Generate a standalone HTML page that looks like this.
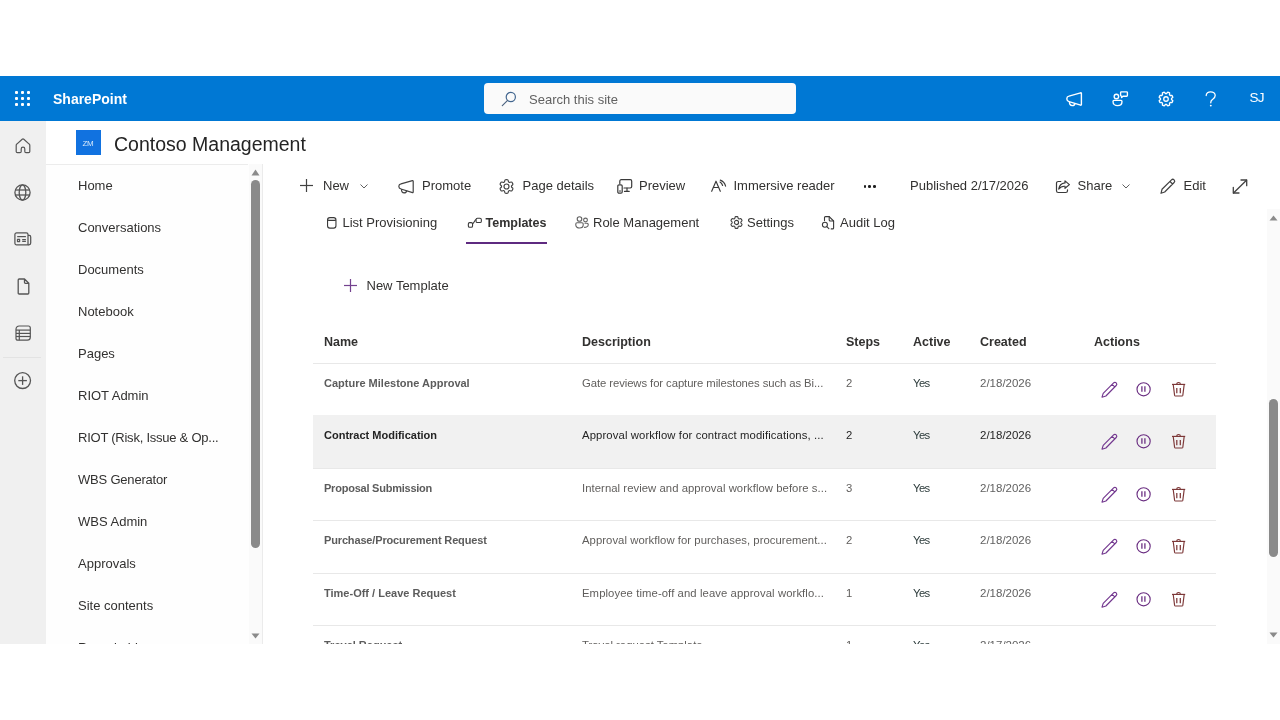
<!DOCTYPE html>
<html><head><meta charset="utf-8">
<style>
*{box-sizing:border-box;margin:0;padding:0}
html,body{width:1280px;height:720px;background:#fff;overflow:hidden;font-family:"Liberation Sans",sans-serif;color:#323130}
.abs{position:absolute}
.t{position:absolute;white-space:nowrap;line-height:1}
#frame{will-change:transform;position:absolute;left:0;top:76px;width:1280px;height:568px;overflow:hidden;background:#fff}
#suite{position:absolute;left:0;top:0;width:1280px;height:45px;background:#0078d4}
#rail{position:absolute;left:0;top:45px;width:46px;height:523px;background:#f0f0f0}
#nav{position:absolute;left:46px;top:88px;width:216px;height:480px;background:#fefefe;overflow:hidden}
#vborder{position:absolute;left:262px;top:88px;width:1px;height:480px;background:#ebebeb}
.nav-item{position:absolute;left:32px;font-size:13px;color:#323130;white-space:nowrap;line-height:1}
svg{position:absolute;overflow:visible}
.cmd{position:absolute;white-space:nowrap;line-height:1;font-size:13px;color:#323130}
.th{position:absolute;white-space:nowrap;line-height:1;font-size:12.5px;font-weight:700;color:#323130}
.c{position:absolute;white-space:nowrap;line-height:1;font-size:11.3px;color:#605e5c}
.cn{font-weight:700;color:#505050;font-size:11px}
.yes{color:#2b3a3a;letter-spacing:-0.6px}
.hline{position:absolute;left:313px;width:903px;height:1px;background:#e8e8e8}
</style></head>
<body>
<div id="frame">
  <div id="suite">
    <svg style="left:15px;top:15px" width="16" height="15" viewBox="0 0 16 15">
      <g fill="#fff">
        <rect x="0" y="0" width="3" height="3" rx="1"/><rect x="6" y="0" width="3" height="3" rx="1"/><rect x="12" y="0" width="3" height="3" rx="1"/>
        <rect x="0" y="6" width="3" height="3" rx="1"/><rect x="6" y="6" width="3" height="3" rx="1"/><rect x="12" y="6" width="3" height="3" rx="1"/>
        <rect x="0" y="12" width="3" height="3" rx="1"/><rect x="6" y="12" width="3" height="3" rx="1"/><rect x="12" y="12" width="3" height="3" rx="1"/>
      </g>
    </svg>
    <div class="t" style="left:53px;top:16px;font-size:14px;font-weight:700;color:#fff">SharePoint</div>
    <div class="abs" style="left:484px;top:7px;width:312px;height:31px;background:#fafafa;border-radius:4px"></div>
    <svg style="left:501px;top:15px" width="16" height="16" viewBox="0 0 16 16">
      <circle cx="9.8" cy="6" r="4.6" fill="none" stroke="#42668f" stroke-width="1.2"/>
      <line x1="6.6" y1="9.3" x2="1.3" y2="14.6" stroke="#4d6480" stroke-width="1.2" stroke-linecap="round"/>
    </svg>
    <div class="t" style="left:529px;top:17px;font-size:13px;color:#616161">Search this site</div>
    <!-- megaphone -->
    <svg style="left:1066px;top:15.5px" width="17" height="15" viewBox="0 0 17 15">
      <g fill="none" stroke="#fff" stroke-width="1.4" stroke-linejoin="round">
        <path d="M15.4 1.4 V12.6 C15.4 13 15.1 13.3 14.7 13.2 L3 9.6 C1.6 9.2 0.9 8.5 0.9 7.3 V6.3 C0.9 5.1 1.6 4.4 3 4.1 L14.6 0.8 C15 0.7 15.4 1 15.4 1.4 Z"/>
        <path d="M3.6 9.8 C3.2 12 4.4 13.6 6.2 13.6 C7.7 13.6 8.8 12.6 9 11.3"/>
      </g>
    </svg>
    <!-- chat person -->
    <svg style="left:1112px;top:15px" width="17" height="16" viewBox="0 0 17 16">
      <g fill="none" stroke="#fff" stroke-width="1.35" stroke-linejoin="round">
        <circle cx="4.4" cy="5.45" r="2.25"/>
        <path d="M1 10.4 C1 9.8 1.4 9.4 2 9.4 H9 C9.6 9.4 10 9.8 10 10.4 C10 13.3 8 14.6 5.5 14.6 C3 14.6 1 13.3 1 10.4 Z"/>
        <path d="M9.3 0.8 H14.6 C15 0.8 15.4 1.2 15.4 1.6 V4.4 C15.4 4.8 15 5.2 14.6 5.2 H11 L9.6 6.6 V5.2 C9.1 5.1 8.6 4.8 8.6 4.3 V1.6 C8.6 1.2 8.9 0.8 9.3 0.8 Z"/>
      </g>
    </svg>
    <!-- gear -->
    <svg style="left:1157.5px;top:15px" width="16" height="16" viewBox="0 0 24 24">
      <g fill="none" stroke="#fff" stroke-width="1.95" stroke-linejoin="round">
        <path d="M12.85 3.74 L14.64 1.73 L17.40 2.88 L17.24 5.56 L18.44 6.76 L21.12 6.60 L22.27 9.36 L20.26 11.15 L20.26 12.85 L22.27 14.64 L21.12 17.40 L18.44 17.24 L17.24 18.44 L17.40 21.12 L14.64 22.27 L12.85 20.26 L11.15 20.26 L9.36 22.27 L6.60 21.12 L6.76 18.44 L5.56 17.24 L2.88 17.40 L1.73 14.64 L3.74 12.85 L3.74 11.15 L1.73 9.36 L2.88 6.60 L5.56 6.76 L6.76 5.56 L6.60 2.88 L9.36 1.73 L11.15 3.74 Z"/>
        <circle cx="12" cy="12" r="3.4"/>
      </g>
    </svg>
    <svg style="left:1205px;top:15px" width="12" height="16" viewBox="0 0 12 16"><g fill="none" stroke="#fff" stroke-width="1.3" stroke-linecap="round"><path d="M1.2 4.6 C1.2 2.2 3.2 0.8 5.6 0.8 C8.2 0.8 10.2 2.4 10.2 4.6 C10.2 6.4 9.2 7.3 7.8 8.2 C6.5 9 5.8 9.8 5.8 11.2 V11.8"/></g><circle cx="5.8" cy="14.6" r="0.95" fill="#fff"/></svg>
    <div class="t" style="left:1249.5px;top:14.5px;font-size:13.5px;color:#fff;letter-spacing:-0.8px">SJ</div>
  </div>
  <div id="rail">
    <!-- home -->
    <svg style="left:15px;top:17px" width="16" height="16" viewBox="0 0 16 16">
      <path d="M7.2 1.3 C7.7 0.9 8.3 0.9 8.8 1.3 L14.2 6.1 C14.6 6.4 14.8 6.9 14.8 7.4 V13.4 C14.8 14.1 14.3 14.6 13.6 14.6 H11 C10.3 14.6 9.8 14.1 9.8 13.4 V10.9 C9.8 9.9 9 9.1 8 9.1 C7 9.1 6.2 9.9 6.2 10.9 V13.4 C6.2 14.1 5.7 14.6 5 14.6 H2.4 C1.7 14.6 1.2 14.1 1.2 13.4 V7.4 C1.2 6.9 1.4 6.4 1.8 6.1 Z" fill="none" stroke="#555555" stroke-width="1.2" stroke-linejoin="round"/>
    </svg>
    <!-- globe -->
    <svg style="left:13.7px;top:62.7px" width="17" height="17" viewBox="0 0 17 17">
      <g fill="none" stroke="#555555" stroke-width="1.3">
        <circle cx="8.5" cy="8.5" r="7.6"/>
        <ellipse cx="8.5" cy="8.5" rx="3.3" ry="7.6"/>
        <line x1="1" y1="6" x2="16" y2="6"/><line x1="1" y1="11" x2="16" y2="11"/>
      </g>
    </svg>
    <!-- news -->
    <svg style="left:14px;top:111px" width="18" height="14" viewBox="0 0 18 14">
      <g fill="none" stroke="#555555" stroke-width="1.25" stroke-linejoin="round">
        <path d="M14 12.8 H2.6 C1.6 12.8 0.9 12.1 0.9 11.1 V2.6 C0.9 1.6 1.6 0.9 2.6 0.9 H12.3 C13.3 0.9 14 1.6 14 2.6 Z"/>
        <path d="M14 3.4 H15.3 C16.2 3.4 16.7 4 16.7 4.9 V11.1 C16.7 12.1 16 12.8 15 12.8 H14"/>
        <line x1="3.2" y1="4.6" x2="11.9" y2="4.6"/>
        <rect x="3.5" y="7.4" width="2.1" height="2.1"/>
        <line x1="8.2" y1="7.6" x2="11.9" y2="7.6"/><line x1="8.2" y1="9.4" x2="11.9" y2="9.4"/>
      </g>
    </svg>
    <!-- doc -->
    <svg style="left:17px;top:157px" width="13" height="17" viewBox="0 0 13 17">
      <path d="M1.2 2 C1.2 1.4 1.6 1 2.2 1 H7.5 L11.8 5.3 V15 C11.8 15.6 11.4 16 10.8 16 H2.2 C1.6 16 1.2 15.6 1.2 15 Z M7.5 1 V4.5 C7.5 5 7.9 5.3 8.4 5.3 H11.8" fill="none" stroke="#555555" stroke-width="1.3" stroke-linejoin="round"/>
    </svg>
    <!-- list -->
    <svg style="left:15px;top:204px" width="17" height="17" viewBox="0 0 17 17">
      <g fill="none" stroke="#555555" stroke-width="1.2" stroke-linejoin="round">
        <path d="M4.2 1 H13.4 C14.5 1 15.3 1.8 15.3 2.9 V12.2 C15.3 13.9 14 15.2 12.3 15.2 H2.7 C1.7 15.2 1 14.5 1 13.5 V4.2 C1 2.4 2.4 1 4.2 1 Z"/>
        <line x1="1" y1="5.1" x2="15.3" y2="5.1"/><line x1="1" y1="8.4" x2="15.3" y2="8.4"/><line x1="1" y1="11.5" x2="15.3" y2="11.5"/>
        <line x1="4.3" y1="5.1" x2="4.3" y2="15.2"/>
      </g>
    </svg>
    <div class="abs" style="left:3px;top:236px;width:38px;height:1px;background:#e3e3e3"></div>
    <!-- plus circle -->
    <svg style="left:14px;top:251px" width="18" height="18" viewBox="0 0 18 18">
      <g fill="none" stroke="#555555" stroke-width="1.3">
        <circle cx="8.6" cy="8.6" r="7.9"/>
        <line x1="8.6" y1="4.3" x2="8.6" y2="12.9"/><line x1="4.3" y1="8.6" x2="12.9" y2="8.6"/>
      </g>
    </svg>
  </div>
  <!-- site header -->
  <div class="abs" style="left:76px;top:54px;width:25px;height:25px;background:#1172e0"></div>
  <div class="t" style="left:82.5px;top:63.5px;font-size:8px;color:#d6e8fb;letter-spacing:-0.3px">ZM</div>
  <div class="t" style="left:114px;top:58.5px;font-size:19.5px;color:#242424">Contoso Management</div>
  <div id="nav">
    <div class="abs" style="left:0;top:0;width:202px;height:1px;background:#ececec"></div>
    <div class="nav-item" style="top:15px">Home</div>
    <div class="nav-item" style="top:57px">Conversations</div>
    <div class="nav-item" style="top:99px">Documents</div>
    <div class="nav-item" style="top:141px">Notebook</div>
    <div class="nav-item" style="top:183px">Pages</div>
    <div class="nav-item" style="top:225px">RIOT Admin</div>
    <div class="nav-item" style="top:267px;letter-spacing:-0.24px">RIOT (Risk, Issue &amp; Op...</div>
    <div class="nav-item" style="top:309px;letter-spacing:-0.2px">WBS Generator</div>
    <div class="nav-item" style="top:351px">WBS Admin</div>
    <div class="nav-item" style="top:393px">Approvals</div>
    <div class="nav-item" style="top:435px">Site contents</div>
    <div class="nav-item" style="top:477px">Recycle bin</div>
    <!-- scrollbar -->
    <div class="abs" style="left:203px;top:0;width:13px;height:480px;background:#fafafa"></div>
    <svg style="left:205px;top:5px" width="9" height="7" viewBox="0 0 9 7"><path d="M4.5 0.5 L8.5 6.5 H0.5 Z" fill="#8a8a8a"/></svg>
    <div class="abs" style="left:205px;top:16px;width:8.5px;height:368px;background:#8a8a8a;border-radius:4.5px"></div>
    <svg style="left:205px;top:469px" width="9" height="6" viewBox="0 0 9 6"><path d="M0.5 0.5 H8.5 L4.5 5.5 Z" fill="#8a8a8a"/></svg>
  </div>
  <div id="vborder"></div>
  <!-- command bar (frame coords: y = abs - 76) -->
  <svg style="left:300px;top:103px" width="13" height="13" viewBox="0 0 13 13"><g stroke="#424242" stroke-width="1.2"><line x1="6.5" y1="0" x2="6.5" y2="13"/><line x1="0" y1="6.5" x2="13" y2="6.5"/></g></svg>
  <div class="cmd" style="left:323px;top:103px">New</div>
  <svg style="left:360px;top:108px" width="8" height="5" viewBox="0 0 8 5"><path d="M0.5 0.5 L4 4 L7.5 0.5" fill="none" stroke="#616161" stroke-width="1"/></svg>
  <!-- promote -->
  <svg style="left:398px;top:179.5px;top:103.5px" width="17" height="14" viewBox="0 0 17 14">
    <g fill="none" stroke="#424242" stroke-width="1.2" stroke-linejoin="round">
      <path d="M15.2 1.2 V12 C15.2 12.4 14.9 12.7 14.5 12.6 L3 9 C1.6 8.6 0.9 8 0.9 6.8 V5.9 C0.9 4.7 1.6 4.1 3 3.8 L14.4 0.6 C14.8 0.5 15.2 0.8 15.2 1.2 Z"/>
      <path d="M3.6 9.2 C3.2 11.4 4.4 12.9 6.1 12.9 C7.6 12.9 8.6 11.9 8.8 10.6"/>
    </g>
  </svg>
  <div class="cmd" style="left:422px;top:103px">Promote</div>
  <!-- gear -->
  <svg style="left:499.1px;top:102.8px" width="15" height="15" viewBox="0 0 24 24">
    <g fill="none" stroke="#424242" stroke-width="1.9" stroke-linejoin="round">
      <path d="M10.29 1.23 A10.90 10.90 0 0 1 13.71 1.23 C15.15 1.57 14.73 4.48 15.33 4.73 A8.00 8.00 0 0 1 16.63 5.48 C17.15 5.88 19.46 4.05 20.47 5.14 L20.47 5.14 A10.90 10.90 0 0 1 22.18 8.09 C22.61 9.51 19.88 10.60 19.96 11.25 A8.00 8.00 0 0 1 19.96 12.75 C19.88 13.40 22.61 14.49 22.18 15.91 L22.18 15.91 A10.90 10.90 0 0 1 20.47 18.86 C19.46 19.95 17.15 18.12 16.63 18.52 A8.00 8.00 0 0 1 15.33 19.27 C14.73 19.52 15.15 22.43 13.71 22.77 L13.71 22.77 A10.90 10.90 0 0 1 10.29 22.77 C8.85 22.43 9.27 19.52 8.67 19.27 A8.00 8.00 0 0 1 7.37 18.52 C6.85 18.12 4.54 19.95 3.53 18.86 L3.53 18.86 A10.90 10.90 0 0 1 1.82 15.91 C1.39 14.49 4.12 13.40 4.04 12.75 A8.00 8.00 0 0 1 4.04 11.25 C4.12 10.60 1.39 9.51 1.82 8.09 L1.82 8.09 A10.90 10.90 0 0 1 3.53 5.14 C4.54 4.05 6.85 5.88 7.37 5.48 A8.00 8.00 0 0 1 8.67 4.73 C9.27 4.48 8.85 1.57 10.29 1.23 Z"/>
      <circle cx="12" cy="12" r="4.0"/>
    </g>
  </svg>
  <div class="cmd" style="left:522.5px;top:103px">Page details</div>
  <!-- preview -->
  <svg style="left:617px;top:103px" width="16" height="15" viewBox="0 0 16 15">
    <g fill="none" stroke="#3a3a3a" stroke-width="1.2" stroke-linejoin="round" stroke-linecap="round">
      <path d="M2.8 4.6 V2.2 C2.8 1.4 3.4 0.7 4.2 0.7 H13.3 C14.1 0.7 14.7 1.4 14.7 2.2 V7.6 C14.7 8.4 14.1 9 13.3 9 H7"/>
      <path d="M10 9 V12.4"/><path d="M7.5 12.4 H12.2"/>
      <rect x="0.8" y="5.8" width="4.4" height="8.3" rx="1.2"/>
      <path d="M2.4 12 H3.6"/>
    </g>
  </svg>
  <div class="cmd" style="left:639px;top:103px">Preview</div>
  <!-- immersive reader -->
  <svg style="left:711px;top:104px" width="15" height="12" viewBox="0 0 15 12">
    <g fill="none" stroke="#3a3a3a" stroke-width="1.15" stroke-linejoin="round" stroke-linecap="round">
      <path d="M0.7 11.3 L5 1.2 L9.3 11.3 M2.3 7.5 H7.7"/>
      <path d="M9 2.1 C10.3 2.8 11.1 3.9 11.6 5.5"/>
      <path d="M9.3 0.1 C12 1.1 13.9 3.3 14.6 6.1"/>
    </g>
  </svg>
  <div class="cmd" style="left:733.5px;top:103px">Immersive reader</div>
  
  <div class="abs" style="left:863.6px;top:109px;width:2.6px;height:2.6px;border-radius:50%;background:#1e1e1e"></div>
  <div class="abs" style="left:868.4px;top:109px;width:2.6px;height:2.6px;border-radius:50%;background:#1e1e1e"></div>
  <div class="abs" style="left:873.1px;top:109px;width:2.6px;height:2.6px;border-radius:50%;background:#1e1e1e"></div>
  <div class="cmd" style="left:910px;top:103px">Published 2/17/2026</div>
  <!-- share -->
  <svg style="left:1055px;top:104px" width="15" height="14" viewBox="0 0 15 14">
    <g fill="none" stroke="#3a3a3a" stroke-width="1.2" stroke-linejoin="round" stroke-linecap="round">
      <path d="M5.8 1.5 H3.3 C2.3 1.5 1.5 2.3 1.5 3.3 V10.7 C1.5 11.7 2.3 12.5 3.3 12.5 H10.7 C11.7 12.5 12.5 11.7 12.5 10.7 V9.8"/>
      <path d="M10 0.9 L14.4 4.6 L10 8.3 V6.3 C7.5 6.1 5.3 7 3.7 9.1 C4.2 5.7 6.5 3.3 10 2.9 Z"/>
    </g>
  </svg>
  <div class="cmd" style="left:1077.5px;top:103px">Share</div>
  <svg style="left:1122px;top:108px" width="8" height="5" viewBox="0 0 8 5"><path d="M0.5 0.5 L4 4 L7.5 0.5" fill="none" stroke="#616161" stroke-width="1"/></svg>
  <!-- edit -->
  <svg style="left:1160px;top:103px" width="16" height="15" viewBox="0 0 16 15">
    <path d="M1 14.3 L2 10.3 L11.5 0.9 C12.2 0.2 13.4 0.2 14.1 0.9 C14.8 1.6 14.8 2.8 14.1 3.5 L4.7 13 Z M10 2.5 L12.6 5" fill="none" stroke="#424242" stroke-width="1.2" stroke-linejoin="round"/>
  </svg>
  <div class="cmd" style="left:1183.5px;top:103px">Edit</div>
  <!-- expand -->
  <svg style="left:1232px;top:103px" width="16" height="15" viewBox="0 0 16 15">
    <g fill="none" stroke="#424242" stroke-width="1.3" stroke-linecap="round" stroke-linejoin="round">
      <path d="M9 1 H14.7 V6.7"/><path d="M14.5 1.2 L1.5 14"/><path d="M1.3 8.3 V14 H7"/>
    </g>
  </svg>

  <!-- tabs -->
  <svg style="left:327px;top:141px" width="10" height="12" viewBox="0 0 10 12">
    <g fill="none" stroke="#3a3a3a" stroke-width="1.1">
      <rect x="0.55" y="0.6" width="8.4" height="10.5" rx="2.3"/>
      <path d="M0.55 3.1 C2 3.5 7.5 3.5 8.95 3.1"/>
    </g>
  </svg>
  <div class="cmd" style="left:342.5px;top:140px">List Provisioning</div>
  <svg style="left:467px;top:141px" width="16" height="12" viewBox="0 0 16 12">
    <g fill="none" stroke="#3a3a3a" stroke-width="1.1" stroke-linejoin="round">
      <rect x="1.35" y="5.65" width="4.2" height="4.6" rx="1.3"/>
      <rect x="9.05" y="1.25" width="5.3" height="4.3" rx="1.4"/>
      <path d="M5.5 7 C7 6.2 7.6 3.2 9.05 2.6"/>
    </g>
  </svg>
  <div class="cmd" style="left:485.5px;top:141px;font-weight:700;font-size:12.5px;color:#323130">Templates</div>
  <div class="abs" style="left:466px;top:166px;width:81px;height:2px;background:#5e2a80"></div>
  <svg style="left:575px;top:140px" width="14" height="13" viewBox="0 0 14 13">
    <g fill="none" stroke="#616161" stroke-width="1.1">
      <circle cx="4.5" cy="3" r="2.3"/>
      <circle cx="10.5" cy="4" r="1.9"/>
      <path d="M0.8 8 C0.8 7.2 1.3 6.8 2 6.8 H7 C7.7 6.8 8.2 7.2 8.2 8 V9 C8.2 11 6.5 12 4.5 12 C2.5 12 0.8 11 0.8 9 Z"/>
      <path d="M9 11.2 C10 11.5 13.2 11.3 13.2 9 V8.2 C13.2 7.5 12.8 7.2 12 7.2 H9.5"/>
    </g>
  </svg>
  <div class="cmd" style="left:593px;top:140px">Role Management</div>
  <svg style="left:729.6px;top:140px" width="13" height="13" viewBox="0 0 24 24">
    <g fill="none" stroke="#424242" stroke-width="2.1" stroke-linejoin="round">
      <path d="M10.29 1.23 A10.90 10.90 0 0 1 13.71 1.23 C15.15 1.57 14.73 4.48 15.33 4.73 A8.00 8.00 0 0 1 16.63 5.48 C17.15 5.88 19.46 4.05 20.47 5.14 L20.47 5.14 A10.90 10.90 0 0 1 22.18 8.09 C22.61 9.51 19.88 10.60 19.96 11.25 A8.00 8.00 0 0 1 19.96 12.75 C19.88 13.40 22.61 14.49 22.18 15.91 L22.18 15.91 A10.90 10.90 0 0 1 20.47 18.86 C19.46 19.95 17.15 18.12 16.63 18.52 A8.00 8.00 0 0 1 15.33 19.27 C14.73 19.52 15.15 22.43 13.71 22.77 L13.71 22.77 A10.90 10.90 0 0 1 10.29 22.77 C8.85 22.43 9.27 19.52 8.67 19.27 A8.00 8.00 0 0 1 7.37 18.52 C6.85 18.12 4.54 19.95 3.53 18.86 L3.53 18.86 A10.90 10.90 0 0 1 1.82 15.91 C1.39 14.49 4.12 13.40 4.04 12.75 A8.00 8.00 0 0 1 4.04 11.25 C4.12 10.60 1.39 9.51 1.82 8.09 L1.82 8.09 A10.90 10.90 0 0 1 3.53 5.14 C4.54 4.05 6.85 5.88 7.37 5.48 A8.00 8.00 0 0 1 8.67 4.73 C9.27 4.48 8.85 1.57 10.29 1.23 Z"/>
      <circle cx="12" cy="12" r="3.8"/>
    </g>
  </svg>
  <div class="cmd" style="left:747px;top:140px">Settings</div>
  <svg style="left:822px;top:140px" width="13" height="14" viewBox="0 0 13 14">
    <g fill="none" stroke="#3a3a3a" stroke-width="1.1" stroke-linejoin="round" stroke-linecap="round">
      <path d="M2.5 4.6 V1.6 C2.5 1 2.9 0.6 3.5 0.6 H7.2 L11.6 5 V11.9 C11.6 12.5 11.2 12.9 10.6 12.9 H9.2"/>
      <path d="M7.2 0.6 V4 C7.2 4.6 7.6 5 8.2 5 H11.6"/>
      <circle cx="2.9" cy="8.7" r="2.5"/>
      <path d="M4.8 10.6 L6.9 12.7"/>
    </g>
  </svg>
  <div class="cmd" style="left:840px;top:140px">Audit Log</div>

  <!-- right scrollbar -->
  <div class="abs" style="left:1267px;top:133px;width:13px;height:435px;background:#fafafa"></div>
  <svg style="left:1269px;top:139px" width="9" height="6" viewBox="0 0 9 6"><path d="M4.5 0.5 L8.5 5.5 H0.5 Z" fill="#8a8a8a"/></svg>
  <div class="abs" style="left:1268.5px;top:323px;width:9px;height:158px;background:#8a8a8a;border-radius:4.5px"></div>
  <svg style="left:1269px;top:556px" width="9" height="6" viewBox="0 0 9 6"><path d="M0.5 0.5 H8.5 L4.5 5.5 Z" fill="#8a8a8a"/></svg>

  <!-- new template -->
  <svg style="left:344px;top:203px" width="13" height="13" viewBox="0 0 13 13"><g stroke="#74428f" stroke-width="1.2"><line x1="6.5" y1="0" x2="6.5" y2="13"/><line x1="0" y1="6.5" x2="13" y2="6.5"/></g></svg>
  <div class="cmd" style="left:366.5px;top:203px">New Template</div>

  <!-- table header -->
  <div class="th" style="left:324px;top:260px">Name</div>
  <div class="th" style="left:582px;top:260px">Description</div>
  <div class="th" style="left:846px;top:260px">Steps</div>
  <div class="th" style="left:913px;top:260px">Active</div>
  <div class="th" style="left:980px;top:260px">Created</div>
  <div class="th" style="left:1094px;top:260px">Actions</div>
  <div class="hline" style="top:287px"></div>
  <div class="abs" style="left:313px;top:339px;width:903px;height:53px;background:#f1f1f1"></div>
  <div class="hline" style="top:392px"></div>
  <div class="hline" style="top:444px"></div>
  <div class="hline" style="top:497px"></div>
  <div class="hline" style="top:549px"></div>
  <div class="c cn" style="left:324px;top:302px;color:#5c5c5c">Capture Milestone Approval</div>
  <div class="c" style="left:582px;top:302px;letter-spacing:-0.075px">Gate reviews for capture milestones such as Bi...</div>
  <div class="c" style="left:846px;top:302px">2</div>
  <div class="c yes" style="left:913px;top:302px">Yes</div>
  <div class="c" style="left:980px;top:302px;font-size:11.5px;color:#616161">2/18/2026</div>
  <div class="c cn" style="left:324px;top:354px;color:#242424">Contract Modification</div>
  <div class="c" style="left:582px;top:354px;color:#242424;letter-spacing:0.115px">Approval workflow for contract modifications, ...</div>
  <div class="c" style="left:846px;top:354px;color:#242424">2</div>
  <div class="c yes" style="left:913px;top:354px">Yes</div>
  <div class="c" style="left:980px;top:354px;font-size:11.5px;color:#242424">2/18/2026</div>
  <div class="c cn" style="left:324px;top:407px;color:#5c5c5c;letter-spacing:-0.23px">Proposal Submission</div>
  <div class="c" style="left:582px;top:407px;letter-spacing:0.055px">Internal review and approval workflow before s...</div>
  <div class="c" style="left:846px;top:407px">3</div>
  <div class="c yes" style="left:913px;top:407px">Yes</div>
  <div class="c" style="left:980px;top:407px;font-size:11.5px;color:#616161">2/18/2026</div>
  <div class="c cn" style="left:324px;top:459px;color:#5c5c5c;letter-spacing:-0.15px">Purchase/Procurement Request</div>
  <div class="c" style="left:582px;top:459px;letter-spacing:0.055px">Approval workflow for purchases, procurement...</div>
  <div class="c" style="left:846px;top:459px">2</div>
  <div class="c yes" style="left:913px;top:459px">Yes</div>
  <div class="c" style="left:980px;top:459px;font-size:11.5px;color:#616161">2/18/2026</div>
  <div class="c cn" style="left:324px;top:512px;color:#5c5c5c">Time-Off / Leave Request</div>
  <div class="c" style="left:582px;top:512px;letter-spacing:0.09px">Employee time-off and leave approval workflo...</div>
  <div class="c" style="left:846px;top:512px">1</div>
  <div class="c yes" style="left:913px;top:512px">Yes</div>
  <div class="c" style="left:980px;top:512px;font-size:11.5px;color:#616161">2/18/2026</div>
  <svg style="left:1101px;top:305.5px" width="17" height="16" viewBox="0 0 17 16"><path d="M1 15.2 L2.2 11.3 L12.6 0.9 C13.3 0.2 14.5 0.2 15.2 0.9 C15.9 1.6 15.9 2.8 15.2 3.5 L4.9 14 Z M11.2 2.4 L13.7 4.9" fill="none" stroke="#73388f" stroke-width="1.15" stroke-linejoin="round"/></svg>
  <svg style="left:1135.5px;top:306px" width="16" height="16" viewBox="0 0 16 16"><g fill="none" stroke="#6b2f82" stroke-width="1.15"><circle cx="7.6" cy="7.3" r="6.6"/><line x1="5.9" y1="4.3" x2="5.9" y2="9.8" stroke-width="1.3"/><line x1="8.9" y1="4.3" x2="8.9" y2="9.8" stroke-width="1.3"/></g></svg>
  <svg style="left:1170.5px;top:306px" width="16" height="16" viewBox="0 0 16 16"><g fill="none" stroke="#7d3838" stroke-width="1.15" stroke-linejoin="round"><path d="M1 2.4 H14.2"/><path d="M5.8 2.4 C5.8 1 6.4 0.5 7.6 0.5 C8.8 0.5 9.4 1 9.4 2.4"/><path d="M2.2 2.4 L3.6 13.4 C3.7 13.8 4 14 4.4 14 H11 C11.4 14 11.7 13.8 11.8 13.4 L13.2 2.4"/><line x1="5.8" y1="6" x2="5.8" y2="11.2" stroke-width="1.25"/><line x1="9.3" y1="6" x2="9.3" y2="11.2" stroke-width="1.25"/></g></svg>
  <svg style="left:1101px;top:357.5px" width="17" height="16" viewBox="0 0 17 16"><path d="M1 15.2 L2.2 11.3 L12.6 0.9 C13.3 0.2 14.5 0.2 15.2 0.9 C15.9 1.6 15.9 2.8 15.2 3.5 L4.9 14 Z M11.2 2.4 L13.7 4.9" fill="none" stroke="#73388f" stroke-width="1.15" stroke-linejoin="round"/></svg>
  <svg style="left:1135.5px;top:358px" width="16" height="16" viewBox="0 0 16 16"><g fill="none" stroke="#6b2f82" stroke-width="1.15"><circle cx="7.6" cy="7.3" r="6.6"/><line x1="5.9" y1="4.3" x2="5.9" y2="9.8" stroke-width="1.3"/><line x1="8.9" y1="4.3" x2="8.9" y2="9.8" stroke-width="1.3"/></g></svg>
  <svg style="left:1170.5px;top:358px" width="16" height="16" viewBox="0 0 16 16"><g fill="none" stroke="#7d3838" stroke-width="1.15" stroke-linejoin="round"><path d="M1 2.4 H14.2"/><path d="M5.8 2.4 C5.8 1 6.4 0.5 7.6 0.5 C8.8 0.5 9.4 1 9.4 2.4"/><path d="M2.2 2.4 L3.6 13.4 C3.7 13.8 4 14 4.4 14 H11 C11.4 14 11.7 13.8 11.8 13.4 L13.2 2.4"/><line x1="5.8" y1="6" x2="5.8" y2="11.2" stroke-width="1.25"/><line x1="9.3" y1="6" x2="9.3" y2="11.2" stroke-width="1.25"/></g></svg>
  <svg style="left:1101px;top:410.5px" width="17" height="16" viewBox="0 0 17 16"><path d="M1 15.2 L2.2 11.3 L12.6 0.9 C13.3 0.2 14.5 0.2 15.2 0.9 C15.9 1.6 15.9 2.8 15.2 3.5 L4.9 14 Z M11.2 2.4 L13.7 4.9" fill="none" stroke="#73388f" stroke-width="1.15" stroke-linejoin="round"/></svg>
  <svg style="left:1135.5px;top:411px" width="16" height="16" viewBox="0 0 16 16"><g fill="none" stroke="#6b2f82" stroke-width="1.15"><circle cx="7.6" cy="7.3" r="6.6"/><line x1="5.9" y1="4.3" x2="5.9" y2="9.8" stroke-width="1.3"/><line x1="8.9" y1="4.3" x2="8.9" y2="9.8" stroke-width="1.3"/></g></svg>
  <svg style="left:1170.5px;top:411px" width="16" height="16" viewBox="0 0 16 16"><g fill="none" stroke="#7d3838" stroke-width="1.15" stroke-linejoin="round"><path d="M1 2.4 H14.2"/><path d="M5.8 2.4 C5.8 1 6.4 0.5 7.6 0.5 C8.8 0.5 9.4 1 9.4 2.4"/><path d="M2.2 2.4 L3.6 13.4 C3.7 13.8 4 14 4.4 14 H11 C11.4 14 11.7 13.8 11.8 13.4 L13.2 2.4"/><line x1="5.8" y1="6" x2="5.8" y2="11.2" stroke-width="1.25"/><line x1="9.3" y1="6" x2="9.3" y2="11.2" stroke-width="1.25"/></g></svg>
  <svg style="left:1101px;top:462.5px" width="17" height="16" viewBox="0 0 17 16"><path d="M1 15.2 L2.2 11.3 L12.6 0.9 C13.3 0.2 14.5 0.2 15.2 0.9 C15.9 1.6 15.9 2.8 15.2 3.5 L4.9 14 Z M11.2 2.4 L13.7 4.9" fill="none" stroke="#73388f" stroke-width="1.15" stroke-linejoin="round"/></svg>
  <svg style="left:1135.5px;top:463px" width="16" height="16" viewBox="0 0 16 16"><g fill="none" stroke="#6b2f82" stroke-width="1.15"><circle cx="7.6" cy="7.3" r="6.6"/><line x1="5.9" y1="4.3" x2="5.9" y2="9.8" stroke-width="1.3"/><line x1="8.9" y1="4.3" x2="8.9" y2="9.8" stroke-width="1.3"/></g></svg>
  <svg style="left:1170.5px;top:463px" width="16" height="16" viewBox="0 0 16 16"><g fill="none" stroke="#7d3838" stroke-width="1.15" stroke-linejoin="round"><path d="M1 2.4 H14.2"/><path d="M5.8 2.4 C5.8 1 6.4 0.5 7.6 0.5 C8.8 0.5 9.4 1 9.4 2.4"/><path d="M2.2 2.4 L3.6 13.4 C3.7 13.8 4 14 4.4 14 H11 C11.4 14 11.7 13.8 11.8 13.4 L13.2 2.4"/><line x1="5.8" y1="6" x2="5.8" y2="11.2" stroke-width="1.25"/><line x1="9.3" y1="6" x2="9.3" y2="11.2" stroke-width="1.25"/></g></svg>
  <svg style="left:1101px;top:515.5px" width="17" height="16" viewBox="0 0 17 16"><path d="M1 15.2 L2.2 11.3 L12.6 0.9 C13.3 0.2 14.5 0.2 15.2 0.9 C15.9 1.6 15.9 2.8 15.2 3.5 L4.9 14 Z M11.2 2.4 L13.7 4.9" fill="none" stroke="#73388f" stroke-width="1.15" stroke-linejoin="round"/></svg>
  <svg style="left:1135.5px;top:516px" width="16" height="16" viewBox="0 0 16 16"><g fill="none" stroke="#6b2f82" stroke-width="1.15"><circle cx="7.6" cy="7.3" r="6.6"/><line x1="5.9" y1="4.3" x2="5.9" y2="9.8" stroke-width="1.3"/><line x1="8.9" y1="4.3" x2="8.9" y2="9.8" stroke-width="1.3"/></g></svg>
  <svg style="left:1170.5px;top:516px" width="16" height="16" viewBox="0 0 16 16"><g fill="none" stroke="#7d3838" stroke-width="1.15" stroke-linejoin="round"><path d="M1 2.4 H14.2"/><path d="M5.8 2.4 C5.8 1 6.4 0.5 7.6 0.5 C8.8 0.5 9.4 1 9.4 2.4"/><path d="M2.2 2.4 L3.6 13.4 C3.7 13.8 4 14 4.4 14 H11 C11.4 14 11.7 13.8 11.8 13.4 L13.2 2.4"/><line x1="5.8" y1="6" x2="5.8" y2="11.2" stroke-width="1.25"/><line x1="9.3" y1="6" x2="9.3" y2="11.2" stroke-width="1.25"/></g></svg>
  <div class="c cn" style="left:324px;top:564px;color:#5c5c5c">Travel Request</div>
  <div class="c" style="left:582px;top:564px">Travel request Template</div>
  <div class="c" style="left:846px;top:564px">1</div>
  <div class="c yes" style="left:913px;top:564px">Yes</div>
  <div class="c" style="left:980px;top:564px;font-size:11.5px;color:#616161">2/17/2026</div>

</div>
</body></html>
